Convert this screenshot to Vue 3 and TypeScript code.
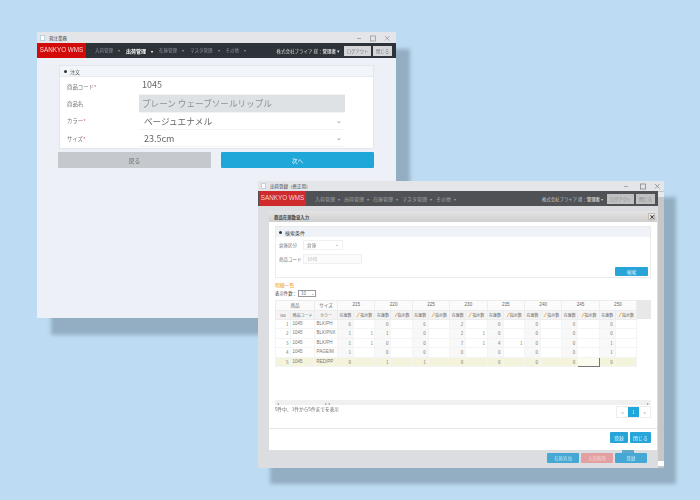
<script setup lang="ts">
interface Cell {
  stock: number
  order?: number
}

interface DetailRow {
  no: number
  code: string
  color: string
  cells: Cell[]
}

const navItems = ['入荷管理', '出荷管理', '在庫管理', 'マスタ管理', 'その他']
const sizes = [215, 220, 225, 230, 235, 240, 245, 250]

function toCells(stock: number[], orders: Record<number, number> = {}): Cell[] {
  return stock.map((s, i) => ({ stock: s, order: orders[i] }))
}

const rows: DetailRow[] = [
  { no: 1, code: '1045', color: 'BLK/PH', cells: toCells([6, 0, 6, 2, 0, 0, 0, 0]) },
  { no: 2, code: '1045', color: 'BLK/PNX', cells: toCells([1, 1, 0, 2, 0, 0, 0, 0], { 0: 1, 3: 1 }) },
  { no: 3, code: '1045', color: 'BLK/PH', cells: toCells([1, 0, 0, 7, 4, 0, 0, 1], { 0: 1, 3: 1, 4: 1 }) },
  { no: 4, code: '1045', color: 'PAGE/M', cells: toCells([1, 0, 0, 0, 0, 0, 0, 1]) },
  { no: 5, code: '1045', color: 'RED/PP', cells: toCells([0, 1, 1, 0, 0, 0, 0, 0]) },
]
</script>

<template>
  <div class="desktop">
    <!-- 注文入力ウィンドウ -->
    <section class="window win-order">
      <header class="titlebar">
        <span class="app-icon"></span>
        <span class="title-text">発注業務</span>
        <span class="win-controls">
          <svg viewBox="0 0 44 8" width="44" height="8">
            <path d="M6 4.500h4" stroke="#999" stroke-width="0.8" fill="none" />
            <rect x="19.500" y="2" width="5" height="5" stroke="#999" stroke-width="0.8" fill="none" />
            <path d="M34 2l4.500 4.500m0-4.500l-4.500 4.500" stroke="#999" stroke-width="0.8" fill="none" />
          </svg>
        </span>
      </header>
      <nav class="navbar">
        <div class="brand">SANKYO WMS</div>
        <ul class="menu">
          <li v-for="item in navItems" :key="item" :class="{ active: item === '出荷管理' }">{{ item }}<i>▾</i></li>
        </ul>
        <div class="account">
          <span>株式会社ブライア 様：<b>管理者</b> ▾</span>
          <button class="nav-btn logout">ログアウト</button>
          <button class="nav-btn close">閉じる</button>
        </div>
      </nav>
      <div class="order-body">
        <div class="order-panel">
          <div class="order-head"><span class="dot"></span>注文</div>
          <div class="order-form">
            <label>商品コード<em>*</em></label>
            <div class="field latin first">1045</div>
            <label>商品名</label>
            <div class="field readonly">プレーン ウェーブソールリップル</div>
            <label>カラー<em>*</em></label>
            <div class="field select">ベージュエナメル<span class="caret">⌄</span></div>
            <label>サイズ<em>*</em></label>
            <div class="field select latin">23.5cm<span class="caret">⌄</span></div>
          </div>
        </div>
        <div class="order-actions">
          <button class="big-btn back">戻る</button>
          <button class="big-btn next">次へ</button>
        </div>
      </div>
    </section>

    <!-- 出荷登録ウィンドウ -->
    <section class="window win-stock">
      <header class="titlebar small">
        <span class="app-icon"></span>
        <span class="title-text">出荷登録（修正用）</span>
        <span class="win-controls">
          <svg viewBox="0 0 44 8" width="44" height="8">
            <path d="M5 4.500h4" stroke="#999" stroke-width="0.8" fill="none" />
            <rect x="21.500" y="2" width="5" height="5" stroke="#888" stroke-width="0.8" fill="none" />
            <path d="M36 2l4.500 4.500m0-4.500l-4.500 4.500" stroke="#888" stroke-width="0.8" fill="none" />
          </svg>
        </span>
      </header>
      <div class="stock-main">
        <div class="stock-col">
          <nav class="navbar gray">
            <div class="brand">SANKYO WMS</div>
            <ul class="menu">
              <li v-for="item in navItems" :key="item">{{ item }}<i>▾</i></li>
            </ul>
            <div class="account">
              <span>株式会社ブライア 様：<b>管理者</b> ▾</span>
              <button class="nav-btn logout">ログアウト</button>
              <button class="nav-btn close">閉じる</button>
            </div>
          </nav>
          <div class="stock-content">
            <div class="modal">
              <div class="modal-head">
                <span>商品在庫数量入力</span>
                <span class="modal-close">×</span>
              </div>
              <div class="modal-body">
                <div class="search-panel">
                  <div class="search-head"><span class="dot"></span>検索条件</div>
                  <div class="search-form">
                    <div class="search-row">
                      <label>倉庫区分</label>
                      <div class="mini-input mini-select">倉庫<span class="caret">⌄</span></div>
                    </div>
                    <div class="search-row">
                      <label>商品コード</label>
                      <div class="mini-input code">1045</div>
                    </div>
                    <div class="search-foot"><button class="blue-btn search">検索</button></div>
                  </div>
                </div>

                <h3 class="list-title">明細一覧</h3>
                <div class="page-size">
                  表示件数：
                  <span class="size-select">10<span>⌄</span></span>
                </div>

                <div class="grid-wrap">
                  <table class="grid">
                    <colgroup>
                      <col class="c-no" />
                      <col class="c-code" />
                      <col class="c-color" />
                      <template v-for="s in sizes" :key="s">
                        <col class="c-stock" />
                        <col class="c-order" />
                      </template>
                    </colgroup>
                    <thead>
                      <tr>
                        <th colspan="2">商品</th>
                        <th>サイズ</th>
                        <th v-for="s in sizes" :key="s" colspan="2" class="size-head">{{ s }}</th>
                      </tr>
                      <tr>
                        <th>No</th>
                        <th>商品コード</th>
                        <th>カラー</th>
                        <template v-for="s in sizes" :key="s">
                          <th>在庫数</th>
                          <th class="order-head-cell">
                            <svg viewBox="0 0 5 7" width="4" height="6"><path d="M4 .5L1 5.500.6 6.600 1.600 6 4.600 1z" fill="#eda52b" /></svg>指示数
                          </th>
                        </template>
                      </tr>
                    </thead>
                    <tbody>
                      <tr v-for="row in rows" :key="row.no" :class="{ current: row.no === 5 }">
                        <td class="num">{{ row.no }}</td>
                        <td class="txt">{{ row.code }}</td>
                        <td class="txt">{{ row.color }}</td>
                        <template v-for="(cell, i) in row.cells" :key="i">
                          <td class="num stock">{{ cell.stock }}</td>
                          <td class="num" :class="{ editing: row.no === 5 && i === 6 }">{{ cell.order }}</td>
                        </template>
                      </tr>
                    </tbody>
                  </table>
                  <div class="grid-filler"></div>
                </div>

                <div class="hscroll"><span>◂</span><span class="thumb-end">▸ ◂</span><span>▸</span></div>
                <div class="grid-foot">
                  <span>5件中、1件から5件までを表示</span>
                  <div class="pager">
                    <span>«</span>
                    <span class="on">1</span>
                    <span>»</span>
                  </div>
                </div>
                <div class="modal-actions">
                  <button class="blue-btn">登録</button>
                  <button class="blue-btn">閉じる</button>
                </div>
              </div>
            </div>
            <div class="stock-footer">
              <button class="foot-btn">在庫追加</button>
              <button class="foot-btn danger">入荷削除</button>
              <button class="foot-btn last">登録</button>
            </div>
          </div>
        </div>
        <div class="vscroll"><span class="vbox"></span><span class="vbox end"></span></div>
      </div>
    </section>
  </div>
</template>

<style>
html,
body {
  margin: 0;
  background: #bddcf3;
}
</style>

<style scoped>
.desktop {
  position: relative;
  width: 700px;
  height: 500px;
  overflow: hidden;
  background: #bddcf3;
  font-family: 'Noto Sans CJK JP', 'Noto Sans', sans-serif;
  color: #555;
}
button {
  font-family: inherit;
  padding: 0;
  border: 0;
}
.window {
  position: absolute;
  display: flex;
  flex-direction: column;
  filter: blur(0.35px);
}
.win-order {
  left: 37px;
  top: 32px;
  width: 359px;
  height: 286px;
  background: #edf1f7;
  box-shadow: 14px 17px 4px #93aec3;
}
.win-stock {
  left: 258px;
  top: 181px;
  width: 406px;
  height: 287px;
  background: #dcdde1;
  box-shadow: 12px 16px 4px #93aec3;
}
.titlebar {
  display: flex;
  align-items: center;
  height: 11px;
  flex: none;
  padding-left: 3px;
  background: #e3e5e8;
  font-size: 4.500px;
  color: #444;
  white-space: nowrap;
}
.titlebar.small {
  height: 10px;
}
.app-icon {
  width: 3px;
  height: 4px;
  margin-right: 4px;
  border: 1px solid #bcd3e4;
  background: #fff;
}
.win-controls {
  margin-left: auto;
  margin-right: 1px;
  display: flex;
}
.navbar {
  display: flex;
  align-items: center;
  height: 15px;
  flex: none;
  background: #2d3339;
  color: #8f959b;
  font-size: 4.500px;
  white-space: nowrap;
}
.navbar.gray {
  background: #4f5154;
  color: #a2a4a6;
  font-size: 5px;
}
.brand {
  flex: none;
  width: 49px;
  height: 100%;
  background: #d20a0a;
  color: #f5d7d7;
  font-family: 'Liberation Sans', sans-serif;
  font-size: 6.300px;
  line-height: 14px;
  text-align: center;
}
.gray .brand {
  width: 47px;
  margin-left: 1px;
  background: #cf2a2c;
}
.menu {
  display: flex;
  gap: 6px;
  margin: 0 0 0 9px;
  padding: 0;
  list-style: none;
}
.gray .menu {
  gap: 4px;
}
.menu i {
  margin-left: 5px;
  font-style: normal;
  font-size: 3.500px;
}
.gray .menu i {
  margin-left: 3px;
}
.menu .active {
  color: #fff;
  font-weight: 700;
  font-size: 5px;
}
.account {
  display: flex;
  align-items: center;
  gap: 2px;
  margin-left: auto;
  margin-right: 4px;
  color: #d8dade;
  font-size: 4.500px;
}
.gray .account {
  margin-right: 3px;
  color: #c8c9cb;
  font-size: 4.400px;
}
.nav-btn {
  height: 10px;
  background: #d4d6d9;
  color: #777;
  font-size: 4.300px;
}
.nav-btn.logout {
  width: 27px;
  margin-left: 2px;
}
.nav-btn.close {
  width: 19px;
}
.gray .nav-btn {
  background: #bfc0c2;
  color: #8b8b8b;
}
.order-body {
  padding: 7px 22px 0 21px;
}
.order-panel {
  margin: 0 0 0 1px;
  background: #fff;
  border: 1px solid #e3e6ea;
}
.order-head {
  display: flex;
  align-items: center;
  height: 10px;
  padding-left: 4px;
  background: #f2f5f9;
  border-bottom: 1px solid #e6e9ee;
  font-size: 5px;
}
.dot {
  width: 3px;
  height: 3px;
  margin-right: 3px;
  border-radius: 50%;
  background: #333;
}
.order-form {
  display: grid;
  grid-template-columns: 79px 206px;
  grid-auto-rows: 17.300px;
  padding: 1px 0 1px;
  align-items: center;
}
.order-form label {
  padding-left: 7px;
  font-size: 5.400px;
  color: #777;
}
.order-form em {
  color: #e33;
  font-style: normal;
}
.field {
  display: flex;
  align-items: center;
  height: 100%;
  padding-left: 3px;
  border-bottom: 1px solid #f3f3f3;
  box-sizing: border-box;
  font-size: 8.600px;
  color: #666;
}
.field.latin {
  font-size: 9px;
}
.field.first {
  padding-bottom: 3px;
}
.field.readonly {
  background: #dfe2e5;
  color: #8c9094;
}
.field.select {
  position: relative;
  padding-left: 5px;
}
.caret {
  position: absolute;
  right: 3px;
  top: 2px;
  font-size: 7px;
  color: #888;
}
.order-actions {
  display: grid;
  grid-template-columns: 153px 153px;
  gap: 10px;
  margin-top: 3px;
}
.big-btn {
  height: 16px;
  border-radius: 1px;
  font-size: 5.800px;
}
.back {
  background: #c5c8cc;
  color: #666;
}
.next {
  background: #1fa7da;
  color: #dff3fb;
}
.stock-main {
  display: flex;
  flex: 1;
  min-height: 0;
}
.stock-col {
  flex: 1;
  min-width: 0;
  display: flex;
  flex-direction: column;
}
.stock-content {
  flex: 1;
  padding: 5px 1px 0 11px;
  display: flex;
  flex-direction: column;
}
.modal {
  height: 239px;
  display: flex;
  flex-direction: column;
  background: #fff;
}
.modal-head {
  display: flex;
  align-items: center;
  justify-content: space-between;
  flex: none;
  height: 11px;
  padding: 0 2px 0 5px;
  background: linear-gradient(#e4e4e4, #cfcfcf);
  font-size: 4.400px;
  font-weight: 700;
  color: #444;
}
.modal-close {
  width: 5px;
  height: 5px;
  background: #eee;
  border: 0.5px solid #bbb;
  color: #000;
  font-size: 6px;
  line-height: 5px;
  text-align: center;
  font-weight: 700;
}
.modal-body {
  flex: 1;
  display: flex;
  flex-direction: column;
  padding: 4px 6px 0;
  font-size: 4.700px;
}
.search-panel {
  height: 52px;
  flex: none;
  box-sizing: border-box;
  border: 1px solid #ebebeb;
}
.search-head {
  display: flex;
  align-items: center;
  height: 10px;
  padding-left: 3px;
  background: #eff3f8;
  color: #444;
  font-size: 5px;
}
.search-form {
  padding: 2px 1px 0 3px;
}
.search-row {
  display: flex;
  align-items: center;
  height: 12px;
  margin-bottom: 2px;
}
.search-row label {
  width: 24px;
  font-size: 4.500px;
  color: #777;
  white-space: nowrap;
}
.mini-input {
  position: relative;
  height: 10px;
  line-height: 8px;
  padding-left: 3px;
  border: 1px solid #f0f0f0;
  box-sizing: border-box;
  color: #888;
}
.mini-select {
  width: 40px;
}
.mini-select .caret {
  top: -1px;
  font-size: 5px;
}
.code {
  width: 59px;
  background: #fbfbfb;
  color: #bbb;
}
.search-foot {
  display: flex;
  justify-content: flex-end;
  padding-right: 1px;
}
.blue-btn {
  height: 11px;
  padding: 0 2px;
  min-width: 18px;
  background: #28a5d8;
  color: #e2f4fb;
  border-radius: 1px;
  font-size: 4.800px;
}
.modal-actions .blue-btn:last-child {
  width: 21px;
}
.blue-btn.search {
  width: 33px;
  height: 9px;
  line-height: 9px;
}
.list-title {
  margin: 3px 0 0;
  height: 7px;
  line-height: 7px;
  font-size: 4.800px;
  font-weight: 400;
  color: #ec9a2a;
}
.page-size {
  display: flex;
  align-items: center;
  height: 8px;
  margin-top: 1px;
  margin-bottom: 1px;
  font-size: 4.400px;
  color: #444;
}
.size-select {
  display: inline-flex;
  justify-content: space-between;
  width: 18px;
  box-sizing: border-box;
  margin-left: 1px;
  padding: 0 1px 0 2px;
  border: 1px solid #999;
  line-height: 4px;
  height: 7px;
  color: #666;
}
.grid-wrap {
  display: flex;
  align-items: flex-start;
  height: 100px;
  margin-top: 2px;
  flex: none;
}
.grid {
  width: 361px;
  flex: none;
  table-layout: fixed;
  border-collapse: collapse;
  font-size: 4.500px;
  color: #777;
}
.c-no {
  width: 15px;
}
.c-code {
  width: 24px;
}
.c-color {
  width: 23px;
}
.c-stock {
  width: 16px;
}
.c-order {
  width: 21.375px;
}
.grid th {
  height: 9px;
  padding: 0;
  border: 1px solid #ececec;
  background: #fbfbfb;
  font-weight: 400;
  font-size: 4px;
  color: #666;
  white-space: nowrap;
  overflow: hidden;
  line-height: 1;
  box-sizing: border-box;
}
.grid thead tr:first-child th {
  height: 10px;
  font-size: 4.600px;
}
.size-head {
  font-family: 'Liberation Sans', sans-serif;
}
.grid thead tr:last-child th {
  background: #f4f4f4;
}
.order-head-cell svg {
  vertical-align: -1px;
}
.grid td {
  height: 9px;
  padding: 0 1.500px;
  border: 1px solid #f4f4f4;
  line-height: 1;
  white-space: nowrap;
  overflow: hidden;
  box-sizing: border-box;
}
.grid tbody tr:nth-child(even) td {
  height: 10px;
}
.num {
  text-align: right;
}
.grid .txt {
  font-family: 'Liberation Sans', sans-serif;
}
.grid td.stock {
  background: #f8f8f8;
  padding-right: 2px;
  border-left-color: #e8e8e8;
}
.grid .current td,
.grid .current td.stock {
  background: #f4f4dc;
}
.grid td.editing {
  background: #fbfbef;
  border: 1px solid #777;
}
.grid-filler {
  flex: 1;
  height: 19px;
  background: #e8e8e8;
}
.hscroll {
  display: flex;
  justify-content: space-between;
  align-items: center;
  flex: none;
  height: 5px;
  padding: 0 2px;
  background: #f0f0f0;
  color: #999;
  font-size: 4px;
}
.thumb-end {
  margin-left: 46px;
  margin-right: auto;
}
.grid-foot {
  display: flex;
  align-items: flex-start;
  justify-content: space-between;
  flex: none;
  height: 23px;
  padding: 0 6px 0;
  border-bottom: 1px solid #e8e8e8;
  margin: 0 -6px;
  line-height: 8px;
  color: #666;
}
.pager {
  display: flex;
  height: 12px;
  margin-top: 1px;
  border: 1px solid #eee;
  box-sizing: border-box;
  line-height: 10px;
  text-align: center;
  color: #999;
}
.pager span {
  width: 11px;
}
.pager .on {
  width: 11px;
  background: #1fa7da;
  color: #d9f1fa;
}
.modal-actions {
  display: flex;
  justify-content: flex-end;
  gap: 2px;
  margin-top: 3px;
}
.stock-footer {
  position: relative;
  display: flex;
  justify-content: flex-end;
  gap: 2px;
  padding: 3px 10px 0 0;
}
.stock-footer::before {
  content: '';
  position: absolute;
  left: 353px;
  top: 0;
  width: 12px;
  height: 3px;
  background: #5fa8c8;
}
.foot-btn {
  width: 32px;
  height: 10px;
  background: #45a8d4;
  color: #bfe3f2;
  border-radius: 1px;
  font-size: 4.400px;
}
.foot-btn.danger {
  background: #e3a0a3;
  color: #f3d4d5;
}
.foot-btn.last {
  color: #d3ecf7;
}
.vscroll {
  display: flex;
  flex-direction: column;
  justify-content: space-between;
  flex: none;
  width: 6px;
  background: #c6c7c9;
}
.vbox {
  height: 5px;
  margin: 1px 0 0;
  background: #e9e9ea;
}
.vbox.end {
  background: #fff;
  margin: 0 0 2px;
}
</style>
